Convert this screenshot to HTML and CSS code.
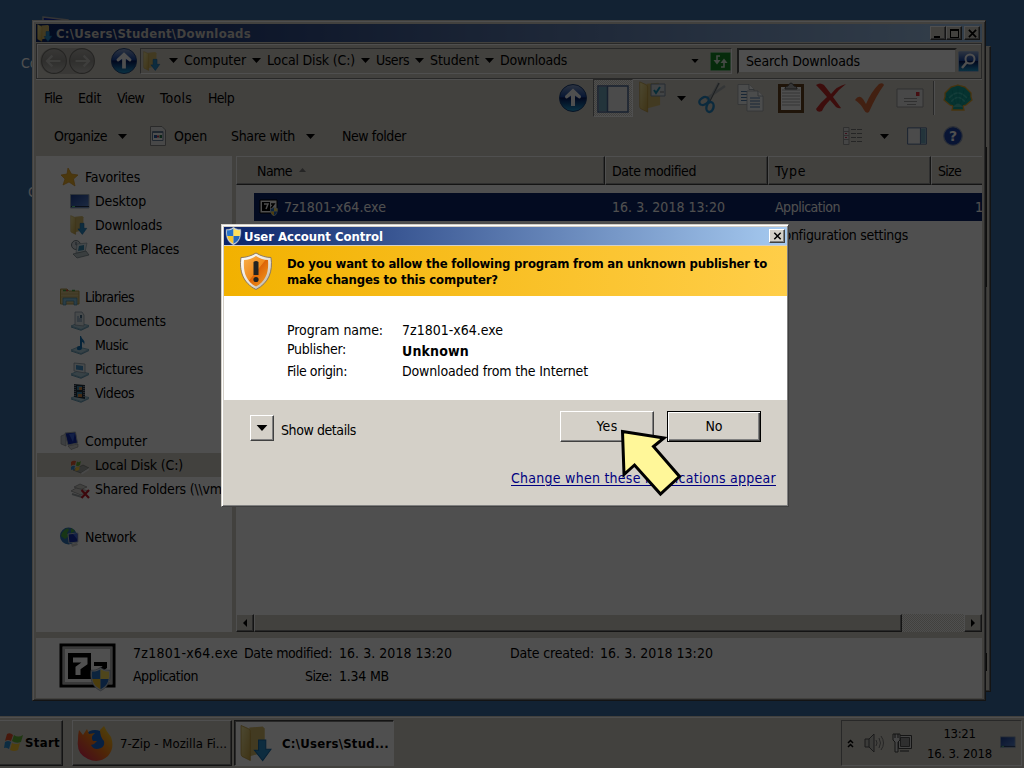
FILE: index.html
```html
<!DOCTYPE html>
<html lang="en">
<head>
<meta charset="utf-8">
<title>User Account Control</title>
<link rel="stylesheet" href="styles.css">
</head>
<body>
<svg class="defs" width="0" height="0">
  <defs>
    <linearGradient id="gold" x1="0" y1="0" x2="1" y2="1"><stop offset="0" stop-color="#f5e9a0"/><stop offset="1" stop-color="#c9a545"/></linearGradient>
    <linearGradient id="blue" x1="0" y1="0" x2="0" y2="1"><stop offset="0" stop-color="#8fa6d0"/><stop offset=".45" stop-color="#1b4aa8"/><stop offset=".5" stop-color="#061a60"/><stop offset="1" stop-color="#22a4dc"/></linearGradient>
    <linearGradient id="screen" x1="0" y1="0" x2="1" y2="1"><stop offset="0" stop-color="#1c3f94"/><stop offset="1" stop-color="#5f8cd8"/></linearGradient>
    <linearGradient id="silver" x1="0" y1="0" x2="0" y2="1"><stop offset="0" stop-color="#b5b3ae"/><stop offset=".5" stop-color="#999792"/><stop offset="1" stop-color="#c4c2be"/></linearGradient>
    <linearGradient id="orange" x1="0" y1="0" x2="1" y2="1"><stop offset="0" stop-color="#f9b04b"/><stop offset=".5" stop-color="#ef8a1c"/><stop offset=".52" stop-color="#dd6508"/><stop offset="1" stop-color="#f5a021"/></linearGradient>
    <linearGradient id="metal" x1="0" y1="0" x2="1" y2="1"><stop offset="0" stop-color="#fff"/><stop offset=".6" stop-color="#e6e0d4"/><stop offset="1" stop-color="#a9a193"/></linearGradient>
    <linearGradient id="fire" x1="1" y1="0" x2="0" y2="1"><stop offset="0" stop-color="#ffe226"/><stop offset=".5" stop-color="#ff7a18"/><stop offset="1" stop-color="#e01565"/></linearGradient>
  </defs>
  <symbol id="shield" viewBox="0 0 16 18">
    <path d="M8 0C6 2 3 2.500 .7 2.300C0 9 1.500 15 8 18C14.500 15 16 9 15.300 2.300C13 2.500 10 2 8 0Z" fill="#d5dce4" stroke="#7f8b98" stroke-width=".5"/>
    <path d="M8 1.500V9H1.800C1.400 7 1.400 5 1.600 3.300C4 3.400 6 3 8 1.500Z" fill="#2874c8"/>
    <path d="M8 1.500V9H14.200C14.600 7 14.600 5 14.400 3.300C12 3.400 10 3 8 1.500Z" fill="#ffe05a"/>
    <path d="M1.800 9H8V16.800C4.300 15 2.400 12.500 1.800 9Z" fill="#f6c52c"/>
    <path d="M14.200 9H8V16.800C11.700 15 13.600 12.500 14.200 9Z" fill="#2569be"/>
  </symbol>
  <symbol id="folder" viewBox="0 0 32 36">
    <path d="M9 3L22 2L24 4V27L9 31Z" fill="#d6bc6c"/>
    <path d="M1 1L8 4C10 5 10 6 10 8V35L2 31Q1 30 1 28Z" fill="url(#gold)" stroke="#b99334" stroke-width=".7"/>
  </symbol>
  <symbol id="down" viewBox="0 0 32 36">
    <use href="#folder"/>
    <path d="M18 15H25V24H30L22 35L14 25H18Z" fill="#2b8fcc" stroke="#1569a8"/>
  </symbol>
  <symbol id="up" viewBox="0 0 28 28">
    <circle cx="14" cy="14" r="13.500" fill="url(#blue)" stroke="#1c3f77"/>
    <path d="M14 4.500L22 12Q22 15 20 14.500L16 11.500V22H12V11.500L8 14.500Q6 15 6 12Z" fill="#fff"/>
  </symbol>
  <symbol id="nav" viewBox="0 0 26 26">
    <circle cx="13" cy="13" r="11.500" fill="url(#silver)" stroke="#777570" stroke-width="1"/>
    <path d="M11.500 8L6.500 13L11.500 18M7 13H19" fill="none" stroke="#c9c7c3" stroke-width="2"/>
  </symbol>
  <symbol id="arrow" viewBox="0 0 9 5"><path d="M0 0H9L4.500 5Z"/></symbol>
  <symbol id="desktop" viewBox="0 0 20 20">
    <path d="M.5 3.500H19V17H.5Z" fill="url(#screen)" stroke="#9caab8"/><path d="M1 15.500H19" stroke="#20304a"/><path d="M2 15.500H5" stroke="#5ee08c"/>
  </symbol>
  <symbol id="library" viewBox="0 0 20 20">
    <path d="M.5 2H7L9 4H19V17H.5Z" fill="#ddcb8c" stroke="#b69b49"/><path d="M3 3.500H6M12 3.500H15" stroke="#49a34a" stroke-width="1.500"/><path d="M6 3.500H8" stroke="#d44" stroke-width="1.500"/><path d="M1 7H19M1 10H19" stroke="#c3aa5f" stroke-width=".7"/>
    <path d="M3 18V11H17V18H14V14H6V18Z" fill="#88c8e6" stroke="#4789aa" stroke-width=".7"/>
  </symbol>
  <symbol id="base" viewBox="0 0 20 20"><path d="M1 15L8 12L19 14.500L11 18.500Z" fill="#b6d4e2" stroke="#6aa2bd" stroke-width=".8"/><path d="M1 16L11 19.300L19 15.500" fill="none" stroke="#3f83a5" stroke-width=".8"/></symbol>
  <symbol id="docs" viewBox="0 0 20 20"><use href="#base"/><path d="M5 1H12L14 4V15L5 14Z" fill="#e5edf2" stroke="#8c9ca8" stroke-width=".8"/><path d="M7 6H9M7 8H12M7 10H12" stroke="#6d8faf"/><path d="M10 4H12V7H10Z" fill="#476f8b"/></symbol>
  <symbol id="music" viewBox="0 0 20 20"><use href="#base"/><path d="M11 1C12 5 16 5 14 10C14 7 12 7 12 7V13C12 16 6 16 7 13C7 11 9 11 10 11V1Z" fill="#1776b9"/></symbol>
  <symbol id="pictures" viewBox="0 0 20 20"><use href="#base"/><path d="M4 4L15 5V14L4 12Z" fill="#e5edf2" stroke="#8c9ca8" stroke-width=".8"/><path d="M6 6L13 7V11.500L6 10.500Z" fill="#4794ca"/></symbol>
  <symbol id="videos" viewBox="0 0 20 20"><use href="#base"/><path d="M4 1L15 2V16L4 14Z" fill="#23323e"/><path d="M5 2V14M14 3V15" stroke="#ccd" stroke-dasharray="1 1"/><path d="M7 3H12V7H7ZM7 9H12V14H7Z" fill="#438caf"/><path d="M9 4H12V7H9ZM8 11H12V14H8Z" fill="#d78c45"/></symbol>
  <symbol id="computer" viewBox="0 0 20 20"><path d="M1 5L6 3V15L1 13Z" fill="#c6cbd0" stroke="#92979c" stroke-width=".7"/><path d="M5 2L15.500 1L17.500 12L8 14Z" fill="#102aaf" stroke="#a7afb5"/><path d="M9 3L15 2L13 11Z" fill="#3b65e2"/><path d="M8 15L18 13V16L11 18.500Z" fill="#d6d6d6" stroke="#777" stroke-width=".5"/></symbol>
  <symbol id="recent" viewBox="0 0 20 20"><circle cx="6" cy="6" r="4.500" fill="#d4dce0" stroke="#758188"/><path d="M6 3V6H9" fill="none" stroke="#576675"/><path d="M7 5L17 4L15 13L6 14Z" fill="#dbe8ed" stroke="#91a2ab" stroke-width=".7"/><path d="M9 7L14 6V11L8 12Z" fill="#388ab0"/><path d="M3 15L16 12L19 16L7 19Z" fill="#bac8cb" stroke="#6f7d82" stroke-width=".7"/></symbol>
  <symbol id="disk" viewBox="0 0 20 20"><path d="M3 15L13 10L19 13L11 18Z" fill="#a4a8a4" stroke="#707670" stroke-width=".7"/><path d="M11 18L19 13V15L12 19.500Z" fill="#e9e9e9"/><path d="M1 7Q3 5 6 6L5 10Q3 9 1 11Z" fill="#e65a30"/><path d="M7 6.500Q9 8 11 6L10 10Q8 12 6 10.500Z" fill="#66b238"/><path d="M1 12Q3 10 5 11L4 15Q2 14 1 15Z" fill="#398fd2"/><path d="M6 11.500Q8 13 10 11L9 15Q7 16 5 15.500Z" fill="#ffd043"/></symbol>
  <symbol id="shared" viewBox="0 0 20 20"><path d="M4 8L10 5L17 8L10 11Z" fill="#d0d0ca" stroke="#888" stroke-width=".7"/><path d="M1 12L6 9L19 12L11 16Z" fill="#dad9d5" stroke="#888" stroke-width=".7"/><path d="M2 15L12 18" stroke="#9fa5a7" stroke-width="2"/><path d="M11.500 11L19 19M19 11L11.500 19" stroke="#c31b28" stroke-width="2.200"/></symbol>
  <symbol id="network" viewBox="0 0 20 20"><circle cx="8.500" cy="9" r="8.500" fill="#3174b8"/><path d="M2 6C6 0 9 1 9 3L7 6L9 9L5 12L1 9ZM11 1L15 4L11 6Z" fill="#4eaf47"/><path d="M8 7L18 6V15L9 16Z" fill="#142daf" stroke="#bbc7ce"/><path d="M13 7L17 6V12Z" fill="#456be0"/><path d="M11 17L17 16L18 18L12 20Z" fill="#ccc"/></symbol>
  <symbol id="pane" viewBox="0 0 32 28"><path d="M1 1H31V27H1Z" fill="#f0f0f2" stroke="#4c6996" stroke-width="1.500"/><path d="M2 2H10V26H2Z" fill="#70a8bd"/><path d="M10.500 1V27" stroke="#4c6996" stroke-width="1.500"/></symbol>
  <symbol id="close" viewBox="0 0 10 10"><path d="M1 1L9 9M9 1L1 9" stroke="#000" stroke-width="1.900"/></symbol>
  <symbol id="paper" viewBox="0 0 18 22"><path d="M1 1H12L17 6V21H1Z" fill="#f2f4f6" stroke="#a0a6aa" stroke-width=".8"/><path d="M12 1V6H17" fill="#fff" stroke="#8c969e" stroke-width=".8"/><path d="M4 8H14M4 11H14M4 14H14M4 17H14" stroke="#4e7cac"/></symbol>
</svg>

<div class="desk">
  <div class="shortcut s1"><svg width="28" height="24" viewBox="0 0 28 24"><path d="M1 1L26 4V22H1Z" fill="#102aaf" stroke="#aaa" stroke-width="1.500"/></svg></div>
  <div class="shortcut s2">Computer</div>
  <div class="shortcut s3">Chrome</div>
  <div class="rearwin"><i></i></div>

  <section class="window">
    <header class="title"><svg width="18" height="18"><use href="#down"/></svg><b data-w="195">C:\Users\Student\Downloads</b>
      <span class="btn wb"><i class="min"></i></span><span class="btn wb"><i class="max"></i></span><span class="btn wb last"><svg width="9" height="9"><use href="#close"/></svg></span>
    </header>
    <div class="address">
      <div class="nav"><svg width="28" height="28"><use href="#nav"/></svg><svg class="flip" width="28" height="28"><use href="#nav"/></svg></div>
      <svg class="go" width="26" height="26"><use href="#up"/></svg>
      <div class="crumbs"><svg width="18" height="20"><use href="#down"/></svg>
        <svg class="ar first" width="9" height="5"><use href="#arrow"/></svg><span data-w="62">Computer</span>
        <svg class="ar" width="9" height="5"><use href="#arrow"/></svg><span data-w="88">Local Disk (C:)</span>
        <svg class="ar" width="9" height="5"><use href="#arrow"/></svg><span data-w="33">Users</span>
        <svg class="ar" width="9" height="5"><use href="#arrow"/></svg><span data-w="49">Student</span>
        <svg class="ar" width="9" height="5"><use href="#arrow"/></svg><span data-w="67">Downloads</span>
        <svg class="drop" width="8" height="4"><use href="#arrow"/></svg>
        <svg width="21" height="19" viewBox="0 0 21 19"><rect x=".5" y=".5" width="20" height="18" rx="1" fill="#148b25" stroke="#7ebd87"/><path d="M10 4H7V9" fill="none" stroke="#dcecdc" stroke-width="1.600"/><path d="M3.500 8H10.500L7 12.500Z" fill="#dcecdc"/><path d="M11 15H14V10" fill="none" stroke="#dcecdc" stroke-width="1.600"/><path d="M10.500 11H17.500L14 6.500Z" fill="#dcecdc"/></svg>
      </div>
      <div class="search"><span data-w="114">Search Downloads</span></div>
      <svg width="21" height="21" viewBox="0 0 21 21"><rect x=".5" y=".5" width="20" height="20" rx="1" fill="url(#blue)" stroke="#9cb3d0"/><circle cx="12" cy="8" r="4.500" fill="none" stroke="#fff" stroke-width="2"/><path d="M9 11L4 17" stroke="#fff" stroke-width="2.500"/></svg>
    </div>
    <div class="menubar">
      <span data-w="18">File</span><span data-w="23">Edit</span><span data-w="27">View</span><span data-w="32">Tools</span><span data-w="26">Help</span>
      <svg width="28" height="28"><use href="#up"/></svg>
      <div class="pressed"><svg width="32" height="28"><use href="#pane"/></svg></div>
      <svg width="32" height="34" viewBox="0 0 32 34"><use href="#folder" width="30" height="32"/><path d="M13 3H27V15H13Z" fill="#d5dbdf" stroke="#7b8ca0"/><path d="M16 9L18 12L22 6" fill="none" stroke="#168fb2" stroke-width="2"/><path d="M22 11H26" stroke="#777"/></svg>
      <svg width="9" height="5"><use href="#arrow"/></svg>
      <svg width="30" height="32" viewBox="0 0 30 32"><path d="M22 1L11 21M28 4L9 17" stroke="#a9afb2" stroke-width="2.600"/><path d="M22 1L13 19" stroke="#555d62"/><ellipse cx="7" cy="19" rx="5" ry="3.500" transform="rotate(-30 7 19)" fill="none" stroke="#2687c5" stroke-width="2.400"/><ellipse cx="13" cy="25" rx="3.500" ry="5" transform="rotate(15 13 25)" fill="none" stroke="#2687c5" stroke-width="2.400"/></svg>
      <svg width="28" height="32" viewBox="0 0 28 32"><use href="#paper" x="0" y="1" width="18" height="23"/><use href="#paper" x="9" y="7" width="18" height="24"/></svg>
      <svg width="26" height="32" viewBox="0 0 26 32"><rect x="1.500" y="3.500" width="23" height="26" fill="#fff" stroke="#65401d" stroke-width="3"/><path d="M4 8H22M4 11H22M4 14H22M4 17H22M4 20H22M4 23H22" stroke="#aaa"/><path d="M7 6Q8 4 10 4Q13 -2 16 4Q18 4 19 6V7H7Z" fill="#aaa" stroke="#555"/></svg>
      <svg width="32" height="32" viewBox="0 0 32 32"><path d="M1 3Q5 0 9 3L16 12Q22 4 31 2Q24 7 18 15L26 26Q24 27 21 25L15 18Q9 24 7 29Q2 31 1 27Q5 21 12 15Q6 8 1 3Z" fill="#c52b27"/></svg>
      <svg width="32" height="32" viewBox="0 0 32 32"><path d="M1 18Q5 12 9 17L12 22Q17 10 25 2Q29 0 30 3Q22 14 15 30Q12 32 10 28Q7 22 1 18Z" fill="#d46839"/></svg>
      <svg width="28" height="22" viewBox="0 0 28 22"><path d="M1 2H27V20H1Z" fill="#e9e9e9" stroke="#999"/><path d="M20 5H23.500V9H20Z" fill="#e3303b"/><path d="M8 11.500H21M8 14.500H21M11 17.500H20" stroke="#888" stroke-width=".8"/></svg>
      <i class="vsep"></i>
      <svg width="30" height="28" viewBox="0 0 30 28"><path d="M15 1L18 2L22 3L25 6L28 9V13L29 16L23 21L20 22L21 26H9L10 22L7 21L1 16L2 13V9L5 6L8 3L12 2Z" fill="#14a69b" stroke="#e6a62a" stroke-width="1.300"/><path d="M6 14Q15 4 24 14M8 18Q15 9 22 18" fill="none" stroke="#3fc4b9" stroke-width="1.500"/><path d="M15 22V4M13 22L9 6M17 22L21 6M11 22L4 12M19 22L26 12" stroke="#0b8788" stroke-width=".5"/><path d="M10 23Q15 16 20 23" fill="#49bdb0"/></svg>
    </div>
    <div class="commands">
      <span data-w="53">Organize</span><svg width="9" height="5"><use href="#arrow"/></svg>
      <svg width="16" height="20" viewBox="0 0 16 20"><path d="M.5 .5H12L15.500 4V19.500H.5Z" fill="#e8e8e8" stroke="#888"/><path d="M2.500 5.500H13V14.500H2.500Z" fill="#fff" stroke="#687d98"/><path d="M3 6H13" stroke="#687d98" stroke-width="2"/><path d="M4 10.500H7" stroke="#2e63ac" stroke-width="3"/><path d="M7 10.500H9" stroke="#c34" stroke-width="2"/><path d="M9.500 10.500H12" stroke="#27794a" stroke-width="3"/></svg>
      <span data-w="33">Open</span><span data-w="64">Share with</span><svg width="9" height="5"><use href="#arrow"/></svg><span data-w="64">New folder</span>
      <svg width="20" height="18" viewBox="0 0 20 18"><path d="M.5 .5H6V17.500H.5ZM.5 4.500H6M.5 8.500H6M.5 12.500H6" fill="#ddd" stroke="#999"/><path d="M8 2.500H20M8 6.500H20M8 10.500H20M8 14.500H20" stroke="#777" stroke-dasharray="5 1"/><path d="M2 6.500H4M2 10.500H4" stroke="#c35"/></svg>
      <svg width="9" height="5"><use href="#arrow"/></svg>
      <svg class="flip" width="20" height="18"><use href="#pane"/></svg>
      <svg width="20" height="20" viewBox="0 0 20 20"><circle cx="10" cy="10" r="9.300" fill="#1b43a8" stroke="#8d99b0" stroke-width="1.200"/><text x="10" y="15" text-anchor="middle" fill="#fff" class="q">?</text></svg>
    </div>
    <main class="content">
      <nav class="tree">
        <div class="row"><svg width="20" height="20" viewBox="0 0 20 20"><path d="M8 1L11.500 7L18 8L13.500 12L15 19L9 15L3 18L5 12L1 8L7 7Z" fill="#f0b52f" stroke="#dc951d" stroke-width=".7"/></svg><span data-w="55">Favorites</span></div>
        <div class="row sub"><svg width="20" height="20"><use href="#desktop"/></svg><span data-w="51">Desktop</span></div>
        <div class="row sub"><svg width="18" height="20"><use href="#down"/></svg><span class="wide" data-w="67">Downloads</span></div>
        <div class="row sub"><svg width="20" height="20"><use href="#recent"/></svg><span data-w="84">Recent Places</span></div>
        <div class="row gap"><svg width="20" height="20"><use href="#library"/></svg><span data-w="49">Libraries</span></div>
        <div class="row sub"><svg width="20" height="20"><use href="#docs"/></svg><span data-w="71">Documents</span></div>
        <div class="row sub"><svg width="20" height="20"><use href="#music"/></svg><span data-w="33">Music</span></div>
        <div class="row sub"><svg width="20" height="20"><use href="#pictures"/></svg><span data-w="48">Pictures</span></div>
        <div class="row sub"><svg width="20" height="20"><use href="#videos"/></svg><span data-w="39">Videos</span></div>
        <div class="row gap"><svg width="20" height="20"><use href="#computer"/></svg><span data-w="62">Computer</span></div>
        <div class="row sub current"><svg width="20" height="20"><use href="#disk"/></svg><span data-w="88">Local Disk (C:)</span></div>
        <div class="row sub"><svg width="20" height="20"><use href="#shared"/></svg><span data-w="137">Shared Folders (\\vmw</span></div>
        <div class="row gap"><svg width="20" height="20"><use href="#network"/></svg><span data-w="51">Network</span></div>
      </nav>
      <div class="files">
        <div class="heads"><div><span data-w="35">Name</span><svg class="sort" width="7" height="4" viewBox="0 0 7 4"><path d="M0 4L3.500 0L7 4Z" fill="#777"/></svg></div><div><span data-w="84">Date modified</span></div><div><span data-w="31">Type</span></div><div><span data-w="23">Size</span></div></div>
        <div class="file chosen"><svg width="19" height="18" viewBox="0 0 19 18"><path d="M1 2H18V15H1Z" fill="#fff" stroke="#000"/><rect x="3" y="4" width="8" height="9"/><path d="M5 6H9L7 11" fill="none" stroke="#fff" stroke-width="1.500"/><path d="M12 6H15L12 10" fill="none" stroke="#000" stroke-width="1.500"/><use href="#shield" x="11" y="9" width="8" height="9"/></svg><span data-w="102">7z1801-x64.exe</span><span data-w="113">16. 3. 2018 13:20</span><span data-w="65">Application</span><span>1</span></div>
        <div class="file second"><span data-w="133">Configuration settings</span></div>
        <div class="scroll"><span class="btn"><svg width="4" height="8" viewBox="0 0 4 8"><path d="M4 0V8L0 4Z"/></svg></span><span class="btn thumb"></span><span class="btn"><svg width="4" height="8" viewBox="0 0 4 8"><path d="M0 0V8L4 4Z"/></svg></span></div>
      </div>
    </main>
    <footer class="details">
      <svg width="58" height="52" viewBox="0 0 58 52"><rect x="2" y="2" width="53" height="41" fill="#fff" stroke="#000" stroke-width="3"/><rect x="5" y="5" width="47" height="35" fill="none" stroke="#bbb" stroke-width="2"/><path d="M9 10H32V36H9Z"/><path d="M14 17H26V20L19 25V32" fill="none" stroke="#fff" stroke-width="5"/><path d="M35 21H46V24L40 28" fill="none" stroke="#000" stroke-width="4"/><use href="#shield" x="31" y="23" width="21" height="26"/></svg>
      <div class="facts"><span data-w="105">7z1801-x64.exe</span><span data-w="88" class="r">Date modified:</span><span data-w="113">16. 3. 2018 13:20</span><span data-w="84">Date created:</span><span data-w="113">16. 3. 2018 13:20</span>
      <span data-w="65">Application</span><span data-w="27" class="r">Size:</span><span data-w="50">1.34 MB</span></div>
    </footer>
  </section>

  <footer class="taskbar">
    <div class="btn task start"><svg width="20" height="20" viewBox="0 0 20 20"><path d="M3 2Q6 0 9 3L7 9Q4 7 1 9Z" fill="#e54d28"/><path d="M10 3Q14 6 19 3L17 10Q12 12 8 9Z" fill="#65b437"/><path d="M1 10Q4 8 7 10L5 17Q2 15 0 16Z" fill="#2b8fd3"/><path d="M8 11Q12 13 16 11L14 18Q10 20 6 18Z" fill="#ffcb30"/></svg><b data-w="35">Start</b></div>
    <div class="btn task ff"><svg width="36" height="38" viewBox="0 0 36 38"><circle cx="18" cy="19" r="13" fill="#1769d2"/><path d="M2 6L6 11L10 5L12 10L18 9Q13 13 16 17L20 17Q18 20 14 21Q17 27 24 24Q28 22 27 17Q23 13 23 6L27 2Q29 7 34 13Q38 24 31 32Q22 40 11 35Q-1 30 1 16Q1 10 2 6Z" fill="url(#fire)"/></svg><span data-w="107">7-Zip - Mozilla Fi...</span></div>
    <div class="btn task active"><svg width="33" height="38"><use href="#down"/></svg><b data-w="107">C:\Users\Stud...</b></div>
    <div class="tray">
      <svg width="7" height="9" viewBox="0 0 7 9"><path d="M1 4L3.500 1.500L6 4M1 8L3.500 5.500L6 8" fill="none" stroke="#000" stroke-width="1.500"/></svg>
      <svg width="20" height="20" viewBox="0 0 20 20"><path d="M1 6H5L10 1V19L5 14H1ZM5 6V14" fill="#bebdb9" stroke="#555"/><path d="M12 7Q14 10 12 13M15 5Q18 10 15 15M17 3Q22 10 17 17" fill="none" stroke="#777"/></svg>
      <svg width="20" height="20" viewBox="0 0 20 20"><path d="M6.500 2.500H19.500V15.500H6.500Z" fill="#ddd" stroke="#444"/><path d="M8.500 4.500H17.500V13.500H8.500Z" fill="#999" stroke="#555"/><path d="M1 1H8V7L6 9V19H3V9L1 7Z" fill="#ddd" stroke="#444"/><path d="M3 1V5M6 1V5M8 18H17" stroke="#333"/></svg>
      <div class="clock"><span data-w="32">13:21</span><span data-w="65">16. 3. 2018</span></div>
      <svg width="16" height="16"><use href="#desktop"/></svg>
    </div>
  </footer>
</div>

<div class="shade"></div>

<section class="dialog">
  <header><svg width="17" height="18"><use href="#shield"/></svg><b data-w="139">User Account Control</b><span class="btn"><svg width="9" height="8"><use href="#close"/></svg></span></header>
  <div class="warning"><svg width="34" height="40" viewBox="0 0 34 40"><path d="M17 2C12 5 7 6.500 2 6.500C0 20 4 32 17 38.500C30 32 34 20 32 6.500C27 6.500 22 5 17 2Z" fill="url(#metal)" stroke="#8b7860" stroke-width="1"/><path d="M17 5C13 7.500 9 9 5 9C4 21 7 30 17 35.500C27 30 30 21 29 9C25 9 21 7.500 17 5Z" fill="url(#orange)"/><path d="M14.500 11Q17 9 19.500 11V24H14.500Z" fill="#222"/><circle cx="17" cy="28.500" r="2.600" fill="#222"/></svg>
    <b><span data-w="480">Do you want to allow the following program from an unknown publisher to</span><span data-w="211">make changes to this computer?</span></b></div>
  <div class="info"><span data-w="96">Program name:</span><span data-w="101">7z1801-x64.exe</span><span data-w="59">Publisher:</span><b data-w="67">Unknown</b><span data-w="60">File origin:</span><span data-w="186">Downloaded from the Internet</span></div>
  <div class="actions"><span class="btn expand"><svg width="12" height="6"><use href="#arrow"/></svg></span><span data-w="75">Show details</span><button class="btn yes"><span data-w="21">Yes</span></button><button class="btn no"><span data-w="17">No</span></button></div>
  <a class="link"><span data-w="265">Change when these notifications appear</span></a>
</section>
<svg class="pointer" width="66" height="70" viewBox="0 0 66 70"><path d="M4.500 4.500L46 11L35.500 19.500L61.500 49.500L42.500 67L16.500 38L6 47.500Z" fill="#fff799" stroke="#000" stroke-width="3"/></svg>
<script src="fit.js"></script>
</body>
</html>
```
FILE: styles.css
```css
* { box-sizing: border-box; }
body { margin: 0; width: 1024px; height: 768px; overflow: hidden; font: 14px/17px "DejaVu Sans Condensed", "DejaVu Sans", sans-serif; font-stretch: condensed; color: #000; }
svg { display: block; flex: none; }
span, b { white-space: nowrap; }
b { font-size: 13px; }
.defs { position: absolute; }
.flip { transform: scaleX(-1); }
.desk { position: relative; width: 1024px; height: 768px; background: #3a6ea5; }
.shade { position: absolute; inset: 0; background: rgba(0,0,0,.69); }
.shortcut { position: absolute; color: #fff; }
.s1 { left: 42px; top: 16px; }
.s2 { left: 21px; top: 55px; }
.s3 { left: 28px; top: 184px; }
.btn { display: flex; align-items: center; justify-content: center; background: #d4d0c8; border: 1px solid; border-color: #fff #404040 #404040 #fff; box-shadow: inset -1px -1px #808080; color: #000; font: inherit; padding: 0; }

.rearwin { position: absolute; left: 60px; top: 46px; width: 931px; height: 646px; background: #d4d0c8; border: 1px solid; border-color: #d4d0c8 #404040 #404040 #d4d0c8; box-shadow: inset -1px -1px #808080; }
.rearwin i { position: absolute; right: 3px; top: 100px; width: 2px; height: 524px; background: #aaa; border-bottom: 18px solid #222; border-top: 140px solid #333; }
.window { position: absolute; left: 32px; top: 20px; width: 954px; height: 681px; padding: 3px 3px 2px 3px; display: flex; flex-direction: column; background: #d4d0c8; border: 1px solid; border-color: #d4d0c8 #404040 #404040 #d4d0c8; box-shadow: inset 1px 1px #fff, inset -1px -1px #808080; }
.title { height: 18px; display: flex; align-items: center; background: linear-gradient(90deg, #0a246a, #a6caf0); color: #fff; padding-right: 2px; flex: none; }
.title b { flex: 1; margin-left: 2px; color: #d4d0c8; }
.wb { width: 16px; height: 14px; }
.wb.last { margin-left: 2px; }
.min { width: 6px; height: 2px; background: #000; margin: 7px 3px 0 0; }
.max { width: 9px; height: 9px; border: 1px solid #000; border-top-width: 2px; }
.address { height: 36px; flex: none; margin-top: 1px; display: grid; grid-template-columns: 55px 16px 29px 592px 5px 220px 1px 21px; align-items: center; border: 1px solid #808080; box-shadow: inset 1px 1px #fff, 0 1px #fff; padding-left: 3px; }
.nav { display: flex; height: 26px; align-items: center; width: 54px; border-radius: 14px; background: #b9b6af; }
.go { grid-column: 3; }
.crumbs { grid-column: 4; display: flex; align-items: center; height: 26px; border: 1px solid; border-color: #808080 #fff #fff #808080; padding-left: 2px; }
.crumbs span { margin-top: -2px; }
.crumbs .ar { margin: -2px 6px 0; }
.crumbs .ar.first { margin-left: 8px; }
.drop { margin: 0 11px 0 auto; }
.search { grid-column: 6; height: 26px; background: #fff; border: 2px solid; border-color: #555 #d4d0c8 #d4d0c8 #555; padding: 3px 7px; }
.address > svg:last-child { grid-column: 8; }
.menubar { height: 38px; flex: none; display: grid; align-items: center; grid-template-columns: 34px 39px 43px 48px 351px 34px 45px 39px 20px 40px 41px 37px 39px 42px 37px 10px 32px; padding-left: 8px; }
.pressed { width: 40px; height: 38px; padding: 5px 3px; border: 1px solid; border-color: #808080 #fff #fff #808080; background: repeating-conic-gradient(#fff 0 25%, #d4d0c8 0 50%) 0 0/2px 2px; }
.vsep { width: 2px; height: 34px; border-left: 1px solid #808080; border-right: 1px solid #fff; }
.commands { height: 39px; flex: none; display: grid; align-items: center; grid-template-columns: 64px 32px 24px 57px 75px 36px 501px 37px 27px 36px 20px; padding: 0 0 1px 18px; }
.q { font: bold 14px "DejaVu Sans", sans-serif; }
.content { display: flex; height: 476px; flex: none; gap: 4px; }
.tree { width: 196px; background: #fff; padding: 9px 0 0 1px; overflow: hidden; }
.row { height: 24px; display: flex; align-items: center; gap: 5px; padding-left: 23px; }
.row.sub { padding-left: 33px; }
.row.gap { margin-top: 24px; }
.row .wide { margin-left: 2px; }
.current { background: #d4d0c8; }
.files { flex: 1; min-width: 0; background: #fff; display: flex; flex-direction: column; overflow: hidden; }
.heads { height: 29px; display: grid; grid-template-columns: 369px 163px 163px 1fr; flex: none; }
.heads div { background: #d4d0c8; border: 1px solid; border-color: #fff #404040 #404040 #fff; display: flex; align-items: center; gap: 7px; padding: 2px 0 0 6px; box-shadow: inset -1px -1px #999; }
.heads div:first-child { padding-left: 20px; }
.heads div:last-child { border-right: 0; box-shadow: inset 0 -1px #999; }
.sort { margin-bottom: 4px; }
.file { height: 28px; display: grid; grid-template-columns: 25px 328px 163px 200px 20px; align-items: center; margin-left: 18px; padding-left: 5px; flex: none; }
.chosen { margin-top: 8px; background: #0a246a; color: #fff; }
.second { padding-left: 521px; grid-template-columns: 1fr; }
.scroll { margin-top: auto; height: 18px; display: grid; grid-template-columns: 18px 648px 1fr 18px; background: repeating-conic-gradient(#fff 0 25%, #d4d0c8 0 50%) 0 0/2px 2px; }
.scroll .btn:last-child { grid-column: 4; }
.details { height: 60px; margin-top: 6px; background: #fff; display: flex; padding: 5px 0 0 23px; flex: none; }
.facts { display: grid; grid-template-columns: 106px 100px 171px 90px 120px; grid-template-rows: 23px 23px; align-content: start; padding-left: 16px; line-height: 21px; }
.r { justify-self: end; margin-right: 7px; }
.taskbar { position: absolute; left: 0; right: 0; top: 716px; height: 52px; display: flex; background: #d4d0c8; box-shadow: inset 0 1px #d4d0c8, inset 0 2px #fff; padding: 4px 2px 2px 0; }
.task { height: 46px; justify-content: flex-start; }
.start { width: 63px; padding: 0 0 2px 4px; gap: 1px; border-left: 0; }
.ff { width: 160px; margin-left: 9px; padding-left: 4px; gap: 7px; }
.active { width: 160px; margin-left: 2px; padding-left: 5px; gap: 9px; background: #fff; border-color: #404040 #fff #fff #404040; box-shadow: inset 1px 1px #808080; }
.task span { font-size: 13px; }
.tray { margin-left: auto; width: 181px; height: 46px; border: 1px solid; border-color: #808080 #fff #fff #808080; display: grid; grid-template-columns: 17px 28px 35px 65px 16px; align-items: center; padding-left: 5px; }
.tray > :last-child { margin: -3px 0 0 8px; }
.clock { display: grid; justify-items: center; line-height: 20px; font-size: 13px; padding-top: 2px; }

.dialog { position: absolute; left: 221px; top: 224px; width: 568px; height: 283px; background: #d4d0c8; border: 1px solid; border-color: #d4d0c8 #404040 #404040 #d4d0c8; box-shadow: inset 1px 1px #fff, inset -1px -1px #808080; padding: 2px 1px 2px 2px; }
.dialog header { height: 18px; display: flex; align-items: center; gap: 2px; padding: 0 2px 0 1px; background: linear-gradient(90deg, #0a246a, #a6caf0); color: #fff; }
.dialog header .btn { width: 16px; height: 14px; margin-left: auto; }
.warning { margin-top: 1px; height: 50px; background: linear-gradient(90deg, #f2b100, #ffce49); display: flex; padding: 5px 0 0 15px; gap: 14px; }
.warning b { display: grid; align-content: start; line-height: 16px; padding-top: 5px; }
.info { height: 104px; background: #fff; display: grid; grid-template-columns: 115px 1fr; grid-template-rows: 20px 21px 20px; padding: 24px 0 0 63px; line-height: 20px; }
.info b { font-size: 14px; line-height: 22px; }
.info span:nth-child(3) { line-height: 19px; }
.actions { display: grid; grid-template-columns: 31px 279px 107px 94px; align-items: start; padding: 11px 0 0 26px; }
.expand { width: 24px; height: 26px; margin-top: 4px; }
.expand + span { margin-top: 11px; }
.yes, .no { width: 94px; height: 31px; }
.no { border-color: #000; box-shadow: inset 1px 1px #fff, inset -1px -1px #404040, inset -2px -2px #808080; }
.link { display: block; padding: 28px 0 0 287px; color: #000080; }
.link span { text-decoration: underline; text-underline-offset: 2px; }
.pointer { position: absolute; left: 618px; top: 427px; }
```
FILE: fit.js
```js
// Tracks each label so that it fills its nominal width.
document.querySelectorAll('[data-w]').forEach(function (el) {
  var range = document.createRange();
  range.selectNodeContents(el);
  var natural = range.getBoundingClientRect().width;
  var step = (Number(el.dataset.w) - natural) / el.textContent.length;
  el.style.letterSpacing = step.toFixed(3) + 'px';
});
```
